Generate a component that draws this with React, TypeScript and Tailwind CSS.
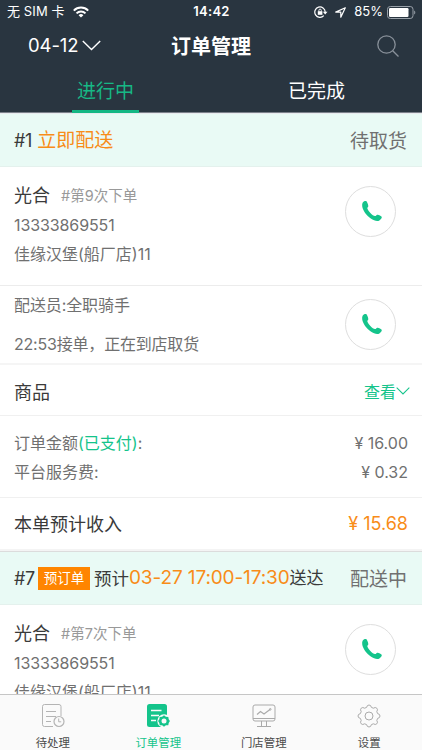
import type { ReactNode } from "react";

interface CustomerProps {
  name: string;
  count: number;
  phone: string;
  address: string;
}

const tabs = [
  { label: "待处理", icon: <PendingIcon />, active: false },
  { label: "订单管理", icon: <OrdersIcon />, active: true },
  { label: "门店管理", icon: <StoreIcon />, active: false },
  { label: "设置", icon: <SettingsIcon />, active: false },
];

export default function App() {
  return (
    <div className="flex h-[750px] w-[422px] flex-col overflow-hidden bg-white font-[Inter,'Noto_Sans_CJK_SC',sans-serif] text-[#3a3a3a]">
      <Header />

      <main className="min-h-0 flex-1 overflow-hidden">
        {/* Order #1 */}
        <OrderHeader status="待取货">
          <span className="text-[18px] tracking-[-0.3px]">#1</span>
          <span className="ml-[5px] pt-[3px] text-[19px] text-[#f88c18]">立即配送</span>
        </OrderHeader>
        <div className="h-[119px] border-b border-[#ececec]">
          <Customer name="光合" count={9} phone="13333869551" address="佳缘汉堡(船厂店)11" />
        </div>

        {/* Courier */}
        <div className="flex h-[79px] justify-between border-b-2 border-[#f5f5f5] pr-[26px] pl-[14px] text-[16px] text-[#707070]">
          <div className="pt-[7px]">
            <p className="leading-6 tracking-[-0.1px] whitespace-nowrap">配送员:全职骑手</p>
            <p className="mt-[15px] leading-6 tracking-[-0.2px] whitespace-nowrap">22:53接单，正在到店取货</p>
          </div>
          <div className="pt-[13px]">
            <CallButton />
          </div>
        </div>

        {/* Goods */}
        <div className="flex h-[51px] items-center justify-between border-b border-[#f0f0f0] pt-1 pr-3 pl-[14px]">
          <span className="text-[18px]">商品</span>
          <span className="flex items-center text-[16px] text-[#14c48b]">
            查看
            <Chevron className="mb-[3px] h-2 w-[14px]" />
          </span>
        </div>

        <div className="h-[82px] border-b border-[#f0f0f0] pt-3 pr-[14px] pl-[14px] text-[16px] text-[#707070]">
          <div className="flex h-[29px] items-center justify-between">
            <span>
              订单金额<span className="text-[#14c48b]">(已支付)</span>:
            </span>
            <span>¥ 16.00</span>
          </div>
          <div className="flex h-[29px] items-center justify-between">
            <span>平台服务费:</span>
            <span>¥ 0.32</span>
          </div>
        </div>

        <div className="flex h-[51px] items-center justify-between pr-[14px] pl-[14px] text-[18px]">
          <span className="pt-px">本单预计收入</span>
          <span className="text-[#f88c18]">¥ 15.68</span>
        </div>
        <div className="h-[3px] border-b border-[#dcdcdc] bg-[#f4f4f4]" />

        {/* Order #7 */}
        <OrderHeader status="配送中">
          <span className="text-[18px] tracking-[-0.3px]">#7</span>
          <span className="ml-[3px] flex h-[23px] w-[52px] items-center justify-center bg-[#ff8500] text-[13.5px] text-white">
            预订单
          </span>
          <span className="ml-1 pt-0.5 text-[17.5px]">预计</span>
          <span className="text-[19px] tracking-[-0.12px] text-[#f88c18]">03-27 17:00-17:30</span>
          <span className="pt-0.5 text-[17px]">送达</span>
        </OrderHeader>
        <Customer name="光合" count={7} phone="13333869551" address="佳缘汉堡(船厂店)11" />
      </main>

      <nav className="grid h-14 shrink-0 grid-cols-4 border-t border-[#c6c6c6] bg-[#fafafa]">
        {tabs.map((tab) => (
          <div key={tab.label} className="flex flex-col items-center pt-[9px]">
            {tab.icon}
            <span
              className={
                tab.active
                  ? "mt-[7px] text-[11.4px] leading-4 text-[#14c48b]"
                  : "mt-[7px] text-[11.4px] leading-4 text-[#4a4a4a]"
              }
            >
              {tab.label}
            </span>
          </div>
        ))}
      </nav>
    </div>
  );
}

function Header() {
  return (
    <header className="shrink-0 bg-[#293540] text-white">
      {/* Status bar */}
      <div className="grid h-6 grid-cols-3 items-center pr-[6px] pl-[7px] text-[13px]">
        <div className="flex items-center gap-2">
          <span className="tracking-[0.1px] whitespace-nowrap">无 SIM 卡</span>
          <WifiIcon />
        </div>
        <span className="text-center font-semibold tracking-[0.3px]">14:42</span>
        <div className="flex items-center justify-end">
          <RotationLockIcon />
          <LocationIcon />
          <span className="mr-1 ml-2">85%</span>
          <BatteryIcon />
        </div>
      </div>

      {/* Title */}
      <div className="grid h-[43px] grid-cols-[1fr_80px_1fr] items-center pr-[23px] pl-7">
        <div className="flex items-center gap-1 text-[18.5px] tracking-[-0.1px]">
          04-12
          <Chevron className="h-[11px] w-[19px]" />
        </div>
        <h1 className="-ml-[5px] pt-0.5 text-center text-[20px] font-semibold whitespace-nowrap">订单管理</h1>
        <div className="flex justify-end">
          <SearchIcon />
        </div>
      </div>

      {/* Order state tabs */}
      <div className="grid h-[46px] grid-cols-2 border-b border-[#7b818a] text-[19px]">
        <div className="flex justify-center">
          <span className="flex h-[46px] w-[67px] items-center justify-center border-b-3 border-[#14b784] pt-2 text-[#17b885]">
            进行中
          </span>
        </div>
        <div className="flex h-[46px] items-center justify-center pt-[5px]">已完成</div>
      </div>
      <div className="h-px bg-[#e8eaee]" />
    </header>
  );
}

function OrderHeader({ status, children }: { status: string; children: ReactNode }) {
  return (
    <div className="flex h-[53px] items-center justify-between border-b border-[#e4f1ed] bg-[#e9faf5] pr-[15px] pl-[14px] whitespace-nowrap">
      <div className="flex items-center">{children}</div>
      <span className="pt-1 text-[19px] text-[#707070]">{status}</span>
    </div>
  );
}

function Customer({ name, count, phone, address }: CustomerProps) {
  return (
    <div className="flex justify-between pr-[26px] pl-[14px] text-[16px] text-[#707070]">
      <div className="pt-[14px] whitespace-nowrap">
        <div className="flex h-[29px] items-center">
          <span className="text-[18px] text-[#3a3a3a]">{name}</span>
          <span className="ml-[11px] text-[14.5px] text-[#999]">#第{count}次下单</span>
        </div>
        <p className="h-[30px] leading-[30px] tracking-[-0.1px]">{phone}</p>
        <p className="h-[29px] leading-[29px]">{address}</p>
      </div>
      <div className="pt-[19px]">
        <CallButton />
      </div>
    </div>
  );
}

function CallButton() {
  return (
    <button
      className="flex h-[51px] w-[51px] items-center justify-center rounded-full border border-[#dedede] bg-white"
      aria-label="拨打电话"
    >
      <svg width="22" height="22" viewBox="0 0 22 22" className="mb-px ml-[3px] text-[#14c48b]">
        <path
          d="M3.700 1.100C1.800 1.600.9 3.600 1.200 6.200c.6 4.300 4.400 9.300 8.600 12.300 3.200 2.300 6.600 3.100 8.600 1.900 1.500-.9 2.500-2.400 2.400-3.300-.2-1.100-3.300-2.500-4.500-2.400-1 .2-1.200 1.500-2.300 1.400C11.600 15.800 6.800 10.800 6.300 8.200c-.1-1 1-1.100 1-2C7.400 4.900 6 1.600 5.100 1.100 4.700.8 4.300.9 3.700 1.100z"
          fill="currentColor"
        />
      </svg>
    </button>
  );
}

function Chevron({ className }: { className: string }) {
  return (
    <svg viewBox="0 0 19 11" fill="none" stroke="currentColor" strokeWidth="1.4" className={className}>
      <path d="M.8.9 9.500 9.600 18.200.9" />
    </svg>
  );
}

function SearchIcon() {
  return (
    <svg width="22" height="22" viewBox="0 0 22 22" fill="none" stroke="#89919a" strokeWidth="1.3">
      <circle cx="9.500" cy="9.500" r="8.700" />
      <path d="m15.700 15.700 5.800 5.800" />
    </svg>
  );
}

function WifiIcon() {
  return (
    <svg width="16" height="12" viewBox="0 0 16 12" fill="none" stroke="white" strokeWidth="2">
      <path d="M.8 4.600a10.200 10.200 0 0 1 14.400 0" />
      <path d="M3.500 7.400a6.400 6.400 0 0 1 9 0" />
      <path d="M8 11.600 5.600 9.200a3.400 3.400 0 0 1 4.800 0z" fill="white" stroke="none" />
    </svg>
  );
}

function RotationLockIcon() {
  return (
    <svg width="14" height="12" viewBox="0 0 14 12" fill="none" stroke="white" strokeWidth="1.200">
      <path d="M9.800 9.700A5.200 5.200 0 1 1 11.200 6" />
      <path d="M8.900 5.700h4.600L11.200 8.500z" fill="white" stroke="none" />
      <rect x="3.800" y="5.200" width="4.600" height="3.600" fill="white" stroke="none" />
      <path d="M4.900 5.500V4.300a1.200 1.200 0 0 1 2.400 0v1.200" strokeWidth=".9" />
    </svg>
  );
}

function LocationIcon() {
  return (
    <svg width="11" height="11" viewBox="0 0 11 11" fill="none" stroke="white" strokeWidth="1.200" className="ml-[7px]">
      <path d="M10.300.8.7 5.100h5.100v5.100z" strokeLinejoin="round" />
    </svg>
  );
}

function BatteryIcon() {
  return (
    <svg width="29" height="13" viewBox="0 0 29 13" fill="none">
      <rect x=".5" y=".5" width="25.500" height="12" rx="2.800" stroke="#98a0a8" />
      <rect x="2" y="2" width="19.500" height="9" rx="1.200" fill="white" />
      <path d="M27.200 4.500c1.500.6 1.500 3.400 0 4z" fill="#98a0a8" />
    </svg>
  );
}

function PendingIcon() {
  return (
    <svg width="24" height="24" viewBox="0 0 24 24" fill="none" stroke="#b4b4b4">
      <path d="M12 22.500H3.500a2 2 0 0 1-2-2v-18a2 2 0 0 1 2-2h14.500a2 2 0 0 1 2 2V12" />
      <path d="M5 7.500h10M5 12.500h10M5 17.500h5" />
      <circle cx="18" cy="17.500" r="5" strokeWidth="1.200" />
      <path d="M17.700 14.500v3.300h2.500" />
    </svg>
  );
}

function OrdersIcon() {
  return (
    <svg width="24" height="24" viewBox="0 0 24 24" fill="none">
      <rect x="1" y="0" width="20" height="23" rx="2.500" fill="#14c48b" />
      <path d="M5 6.500h10.500M5 11.500h8M5 16.500h5" stroke="#fafafa" strokeWidth="1.300" />
      <circle cx="18" cy="17" r="6.700" fill="#fafafa" />
      <path
        d="m18 11.200 1.900 1.600 2.400.1.400 2.300 1.200 1.800-1.200 1.900-.4 2.300-2.400.1-1.900 1.500-1.900-1.500-2.400-.1-.4-2.300-1.200-1.900 1.200-1.800.4-2.300 2.400-.1z"
        fill="#14c48b"
      />
      <circle cx="18" cy="17" r="2.500" fill="#fafafa" />
    </svg>
  );
}

function StoreIcon() {
  return (
    <svg width="24" height="24" viewBox="0 0 24 24" fill="none" stroke="#aaa">
      <rect x="1" y="1" width="22" height="16" rx="2" />
      <path d="M1 14.500h22M9.500 17v5.500M14.500 17v5.500M5 22.500h14" />
      <path d="m5 10.500 3.500-3 3.500 2.500 6-4.500" strokeWidth="1.200" />
      <circle cx="18.300" cy="5.300" r=".8" />
    </svg>
  );
}

function SettingsIcon() {
  return (
    <svg width="24" height="24" viewBox="0 0 24 24" fill="none" stroke="#aaa" strokeLinejoin="round">
      <path d="M9.600 3.400Q10 1 12 1t2.400 2.400l2 .8Q18.400 2.800 19.800 4.200t0 3.400l.8 2Q23 10 23 12t-2.400 2.400l-.8 2q1.400 2 0 3.400t-3.400 0l-2 .8Q14 23 12 23t-2.400-2.400l-2-.8q-2 1.400-3.400 0t0-3.400l-.8-2Q1 14 1 12t2.400-2.400l.8-2Q2.800 5.600 4.200 4.200t3.400 0z" />
      <circle cx="12" cy="12" r="4" />
    </svg>
  );
}
